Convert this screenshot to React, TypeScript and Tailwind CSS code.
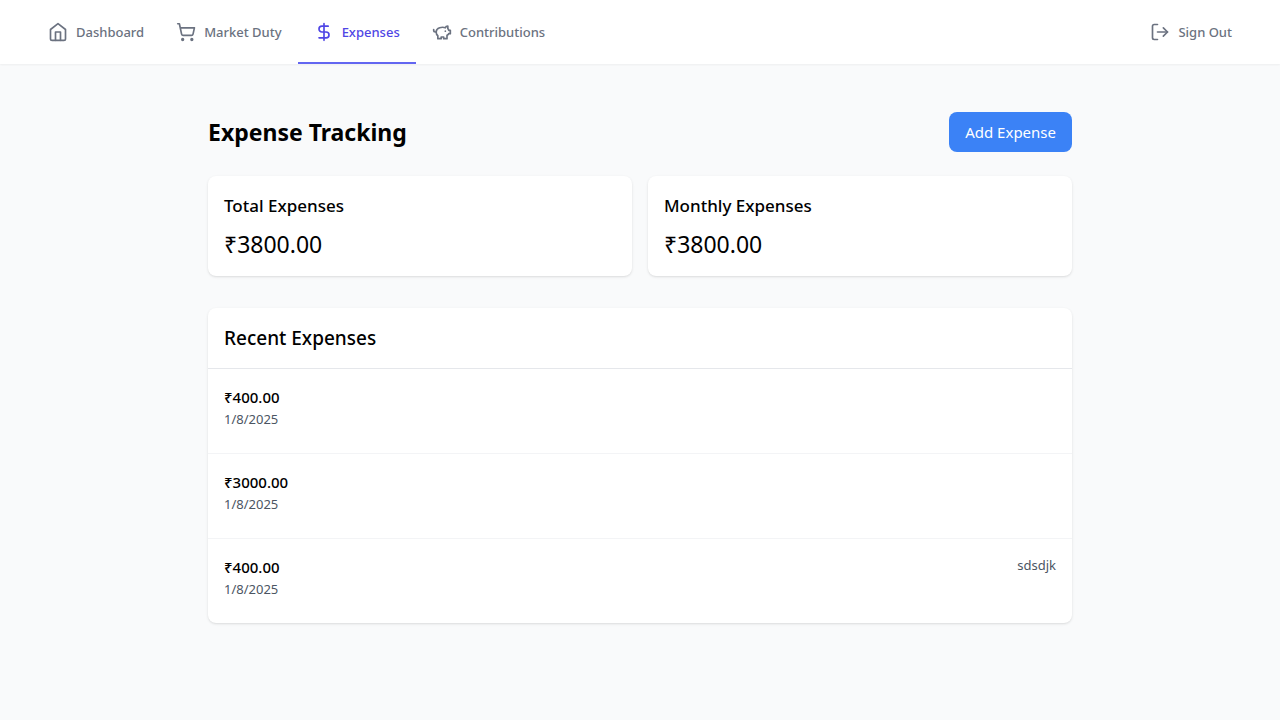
import { LogOut, ShoppingCart, DollarSign } from "lucide-react";
import type { ReactNode } from "react";

function OutlineIcon({ children }: { children: ReactNode }) {
  return (
    <svg
      className="size-5"
      viewBox="0 0 24 24"
      fill="none"
      stroke="currentColor"
      strokeWidth="2"
      strokeLinecap="round"
      strokeLinejoin="round"
      aria-hidden="true"
    >
      {children}
    </svg>
  );
}

function HomeIcon() {
  return (
    <OutlineIcon>
      <path d="m3 9 9-7 9 7v11a2 2 0 0 1-2 2H5a2 2 0 0 1-2-2z" />
      <polyline points="9 22 9 12 15 12 15 22" />
    </OutlineIcon>
  );
}

function PiggyIcon() {
  return (
    <OutlineIcon>
      <path d="M19 5c-1.5 0-2.8 1.4-3 2-3.5-1.5-11-.3-11 5 0 1.8 0 3 2 4.5V20h4v-2h3v2h4v-4c1-.5 1.7-1 2-2h2v-4h-2c0-1-.5-1.5-1-2V5z" />
      <path d="M2 9v1c0 1.1.9 2 2 2h1" />
      <path d="M16 11h.01" />
    </OutlineIcon>
  );
}

type NavItem = { label: string; icon: ReactNode; active?: boolean };

const navItems: NavItem[] = [
  { label: "Dashboard", icon: <HomeIcon /> },
  { label: "Market Duty", icon: <ShoppingCart className="size-5" /> },
  { label: "Expenses", icon: <DollarSign className="size-5" />, active: true },
  { label: "Contributions", icon: <PiggyIcon /> },
];

const expenses = [
  { amount: "₹400.00", date: "1/8/2025", note: "" },
  { amount: "₹3000.00", date: "1/8/2025", note: "" },
  { amount: "₹400.00", date: "1/8/2025", note: "sdsdjk" },
];

function SummaryCard({ title, value }: { title: string; value: string }) {
  return (
    <section className="rounded-lg bg-white p-4 shadow-sm">
      <h2 className="mb-2 text-[17px] leading-7 font-medium">{title}</h2>
      <p className="text-[23px] leading-8">{value}</p>
    </section>
  );
}

export default function App() {
  return (
    <div className="min-h-screen bg-[#f9fafb] font-['Noto_Sans','Open_Sans',sans-serif] text-black">
      <nav className="bg-white shadow-xs">
        <div className="mx-auto flex h-16 max-w-7xl justify-between px-8">
          <div className="flex">
            {navItems.map((item) => (
              <a
                key={item.label}
                href="#"
                aria-current={item.active ? "page" : undefined}
                className={`flex items-center gap-2 border-y-2 border-t-transparent px-4 text-[13px] leading-5 font-medium ${
                  item.active
                    ? "border-b-[#6366f1] text-[#4f46e5]"
                    : "border-b-transparent text-[#6b7280]"
                }`}
              >
                {item.icon}
                {item.label}
              </a>
            ))}
          </div>
          <button
            type="button"
            className="flex items-center gap-2 px-4 text-[13px] leading-5 font-medium text-[#6b7280]"
          >
            <LogOut className="size-5" />
            Sign Out
          </button>
        </div>
      </nav>

      <main className="mx-auto max-w-4xl px-4 py-12">
        <div className="mb-6 flex items-center justify-between">
          <h1 className="text-[23px] leading-8 font-bold">Expense Tracking</h1>
          <button
            type="button"
            className="rounded-lg bg-[#3b82f6] px-4 py-2 text-[15px] leading-6 text-white"
          >
            Add Expense
          </button>
        </div>

        <div className="mb-8 grid grid-cols-2 gap-4">
          <SummaryCard title="Total Expenses" value="₹3800.00" />
          <SummaryCard title="Monthly Expenses" value="₹3800.00" />
        </div>

        <section className="rounded-lg bg-white shadow-sm">
          <h2 className="border-b border-[#e5e7eb] p-4 text-[19px] leading-7 font-medium">
            Recent Expenses
          </h2>
          <ul>
            {expenses.map((expense, index) => (
              <li
                key={index}
                className="flex items-start justify-between border-b border-[#f3f4f6] px-4 pt-4 pb-6 last:border-b-0"
              >
                <div>
                  <p className="text-[15px] leading-6 font-medium">{expense.amount}</p>
                  <p className="text-[13px] leading-5 text-[#4b5563]">{expense.date}</p>
                </div>
                <p className="text-[13px] leading-5 text-[#4b5563]">{expense.note}</p>
              </li>
            ))}
          </ul>
        </section>
      </main>
    </div>
  );
}
